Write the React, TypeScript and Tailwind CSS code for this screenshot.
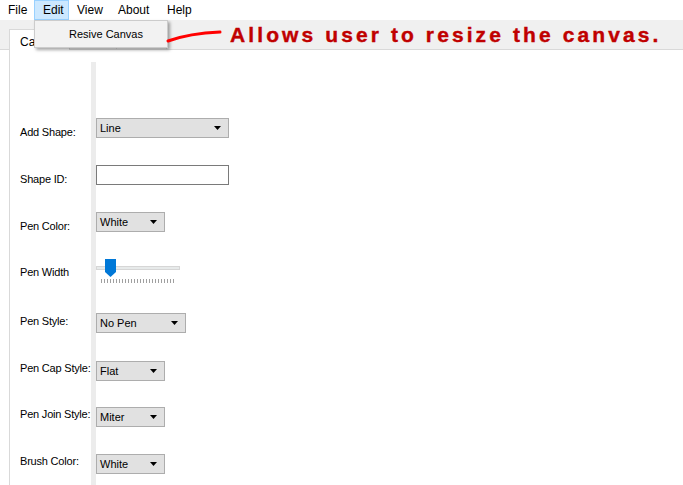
import React from 'react'

type Row = { label: string; h: string; mt: string; control: React.ReactNode }

function Arrow() {
  return (
    <svg width="7" height="4" viewBox="0 0 7 4" className="shrink-0">
      <polygon points="0,0 7,0 3.5,4" fill="#000" />
    </svg>
  )
}

function Combo({ text, w }: { text: string; w: string }) {
  return (
    <div className={`${w} h-[20px] flex items-center justify-between pl-[3px] pr-[7px] bg-[#e1e1e1] border border-[#adadad] text-[11px]`}>
      <span className="pt-px">{text}</span>
      <Arrow />
    </div>
  )
}

function Slider() {
  const ticks = Array.from({ length: 25 }, (_, i) => 5 + i * 3)
  return (
    <svg width="84" height="26" viewBox="0 0 84 26">
      <rect x="0.5" y="7.5" width="83" height="3" fill="#e7eaea" stroke="#d6d6d6" />
      <polygon points="9,0 20,0 20,13 14.5,18 9,13" fill="#0078d7" />
      {ticks.map((x) => (
        <line key={x} x1={x + 0.5} y1="20" x2={x + 0.5} y2="24" stroke="#a0a0a0" strokeWidth="1" />
      ))}
    </svg>
  )
}

const rows: Row[] = [
  { label: 'Add Shape:', h: 'h-[47px]', mt: 'mt-[8px]', control: <Combo text="Line" w="w-[133px]" /> },
  { label: 'Shape ID:', h: 'h-[47px]', mt: 'mt-[8px]', control: <div className="w-[133px] h-[20px] bg-white border border-[#7a7a7a]" /> },
  { label: 'Pen Color:', h: 'h-[47px]', mt: 'mt-[8px]', control: <Combo text="White" w="w-[69px]" /> },
  { label: 'Pen Width', h: 'h-[54px]', mt: 'mt-[7px]', control: <Slider /> },
  { label: 'Pen Style:', h: 'h-[48px]', mt: 'mt-[2px]', control: <Combo text="No Pen" w="w-[90px]" /> },
  { label: 'Pen Cap Style:', h: 'h-[46px]', mt: 'mt-[1px]', control: <Combo text="Flat" w="w-[69px]" /> },
  { label: 'Pen Join Style:', h: 'h-[47px]', mt: 'mt-[1px]', control: <Combo text="Miter" w="w-[69px]" /> },
  { label: 'Brush Color:', h: 'h-[47px]', mt: 'mt-[1px]', control: <Combo text="White" w="w-[69px]" /> },
]

const menus = [
  { name: 'File', w: 'w-[34px]' },
  { name: 'Edit', w: 'w-[35px]' },
  { name: 'View', w: 'w-[41px]' },
  { name: 'About', w: 'w-[49px]' },
  { name: 'Help', w: 'w-[50px]' },
]

export default function App() {
  return (
    <div className="relative w-[683px] h-[485px] overflow-hidden bg-white text-black font-['Liberation_Sans',Arial,sans-serif]">
      {/* menu bar */}
      <div className="flex h-[20px] text-[12px]">
        {menus.map((m) =>
          m.name === 'Edit' ? (
            <div key={m.name} className={`${m.w} h-[20px] pl-[8px] flex items-center bg-[#cce8ff] border border-[#99d1ff]`}>
              {m.name}
            </div>
          ) : (
            <div key={m.name} className={`${m.w} h-[20px] pl-[8px] flex items-center`}>
              {m.name}
            </div>
          )
        )}
      </div>

      {/* tabs */}
      <div className="relative z-0 flex items-end h-[30px] pl-[9px] bg-[#f0f0f0] border-b border-[#d9d9d9]">
        <div className="h-[21px] w-[61px] -mb-px pl-[10px] pt-[3px] bg-white border border-b-0 border-[#d9d9d9] text-[12px]">
          Canvas
        </div>
        <div className="h-[18px] w-[47px] bg-[#f0f0f0] border border-l-0 border-b-0 border-[#d9d9d9]" />
        <div className="h-[18px] w-[50px] bg-[#f0f0f0] border border-l-0 border-b-0 border-[#d9d9d9]" />
      </div>

      {/* tab page */}
      <div className="flex ml-[9px] h-[435px] border-l border-[#d9d9d9] text-[11px] leading-[13px]">
        <div className="w-[81px] pl-[10px] pt-[68px] flex flex-col tracking-[-0.2px]">
          {rows.map((r) => (
            <div key={r.label} className={`${r.h} shrink-0`}>
              <div className={`${r.mt} whitespace-nowrap`}>{r.label}</div>
            </div>
          ))}
        </div>
        <div className="w-[5px] mt-[12px] bg-[#ececec]" />
        <div className="pt-[68px] flex flex-col">
          {rows.map((r) => (
            <div key={r.label} className={`${r.h} shrink-0`}>
              {r.control}
            </div>
          ))}
        </div>
      </div>

      {/* Edit menu popup */}
      <div className="absolute left-[34px] top-[20px] w-[134px] h-[28px] flex items-center pl-[34px] bg-[#f2f2f2] border border-[#cccccc] shadow-[2px_2px_3px_rgba(0,0,0,0.35)] text-[11px]">
        Resive Canvas
      </div>

      {/* annotation */}
      <svg className="absolute left-0 top-0" width="683" height="60" viewBox="0 0 683 60">
        <path d="M168 41 C 182 36, 196 33, 220 32" fill="none" stroke="#ff0000" strokeWidth="3" strokeLinecap="round" />
      </svg>
      <div className="absolute left-[230px] top-[23px] text-[21px] leading-[24px] font-bold tracking-[3.1px] text-[#c00000] whitespace-nowrap [-webkit-text-stroke:0.4px_#c00000]">
        Allows user to resize the canvas.
      </div>
    </div>
  )
}
